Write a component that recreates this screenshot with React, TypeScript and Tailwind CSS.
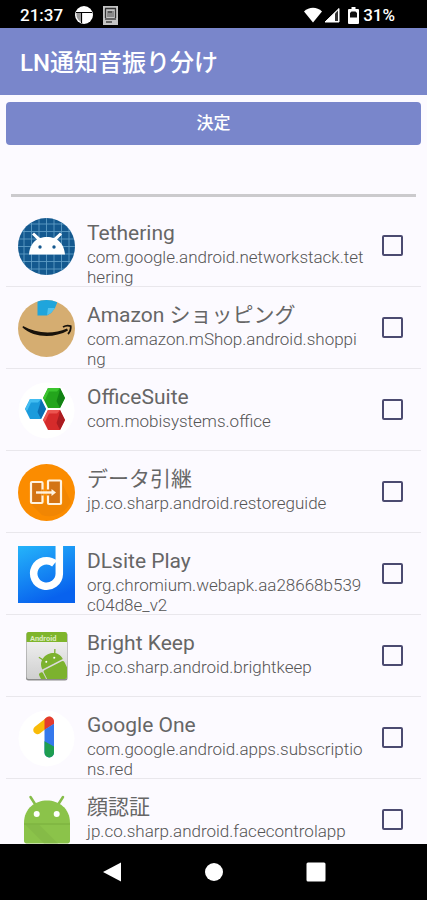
import React, { useState } from 'react';

const TetheringIcon = () => (
  <svg viewBox="0 0 57 57" className="w-full h-full">
    <defs>
      <clipPath id="tether-clip"><circle cx="28.5" cy="28.5" r="28.5" /></clipPath>
    </defs>
    <g clipPath="url(#tether-clip)">
      <rect width="57" height="57" fill="#15598f" />
      <path d="M6 0V57M13.500 0V57M21 0V57M28.500 0V57M36 0V57M43.500 0V57M51 0V57M0 6H57M0 13.500H57M0 21H57M0 28.500H57M0 36H57M0 43.500H57M0 51H57" stroke="#6fabd0" strokeWidth="0.9" opacity="0.8" />
    </g>
    <path d="M11 36.500C11.500 29 15 24 19 21.500L14 16.500L16 14.500L22 20C26 18.500 32 18.500 36 20L42 14.500L44 16.500L39 21.500C43.500 24.500 46.500 29.500 47 36.500Z" fill="#fff" />
    <circle cx="22" cy="29" r="1.700" fill="#15598f" />
    <circle cx="36" cy="29" r="1.700" fill="#15598f" />
  </svg>
);

const AmazonIcon = () => (
  <svg viewBox="0 0 57 57" className="w-full h-full">
    <defs>
      <clipPath id="amazon-clip"><circle cx="28.500" cy="28.500" r="28.500" /></clipPath>
    </defs>
    <g clipPath="url(#amazon-clip)">
      <rect width="57" height="57" fill="#d5ad71" />
      <path d="M19.500 0H39V3L37 8L33 13L29 15.500H19.500Z" fill="#1fa5dc" />
      <path d="M30 8L37 8L33 13L29 15Z" fill="#51c2ec" />
    </g>
    <path d="M5 26C18 33.500 35 34.500 49 28.500L50 30.500C36 38.500 16 38 4.500 27.500Z" fill="#18120b" />
    <path d="M45 27C48 25.200 51 25.500 52.700 26.200C53 29 52 32 50 34" fill="none" stroke="#18120b" strokeWidth="1.800" />
  </svg>
);

const OfficeSuiteIcon = () => (
  <svg viewBox="0 0 57 57" className="w-full h-full">
    <circle cx="28.500" cy="28.500" r="28" fill="#fff" />
    <path d="M30 6H42L47 16L42 26H30L25 16Z" fill="#23a51c" />
    <path d="M30 6H42L39 9.500H31L27 18L25 16Z" fill="#3bc52f" />
    <path d="M42 6L47 16L42 26L38.500 19L41 11Z" fill="#128213" />
    <path d="M12 17H23L28 27L23 37H12L7 27Z" fill="#1b9bdc" />
    <path d="M12 17H23L20 20.500H13L9 29L7 27Z" fill="#42bdf1" />
    <path d="M23 17L28 27L23 37L19.500 30L22 22Z" fill="#0a6fb4" />
    <path d="M30 28H42L47 38L42 48H30L25 38Z" fill="#d62b2b" />
    <path d="M30 28H42L39 31.500H31L27 40L25 38Z" fill="#ec5550" />
    <path d="M42 28L47 38L42 48L38.500 41L41 33Z" fill="#aa1c20" />
  </svg>
);

const RestoreIcon = () => (
  <svg viewBox="0 0 57 57" className="w-full h-full">
    <circle cx="28.500" cy="28.500" r="28.500" fill="#fb8c00" />
    <path d="M13 40L24 51C36 55 47 49 53 38L43 17L36 30L25 40Z" fill="#e77f05" opacity="0.5" />
    <rect x="13" y="18" width="11.500" height="21" rx="1" fill="#d37414" stroke="#fff3e0" strokeWidth="2.200" />
    <rect x="30" y="16.500" width="13" height="23.500" rx="1" fill="#d37414" stroke="#fff3e0" strokeWidth="2.200" />
    <path d="M24.500 25.500V31.500M30 25.500V31.500" stroke="#e77f05" strokeWidth="2.500" />
    <path d="M18 28.500H35" stroke="#fff3e0" strokeWidth="2.400" />
    <path d="M33.500 25L38 28.500L33.500 32Z" fill="#fff3e0" />
  </svg>
);

const DLsiteIcon = () => (
  <svg viewBox="0 0 57 57" className="w-full h-full">
    <defs>
      <linearGradient id="dlsite-bg" x1="0" y1="0" x2="0.400" y2="1">
        <stop offset="0" stopColor="#25b4fa" />
        <stop offset="1" stopColor="#0862ee" />
      </linearGradient>
    </defs>
    <rect width="57" height="57" fill="url(#dlsite-bg)" />
    <path d="M36.500 17.500A12.800 12.800 0 1 0 41.300 28V0" fill="none" stroke="#fff" strokeWidth="7.500" />
  </svg>
);

const BrightKeepIcon = () => (
  <svg viewBox="0 0 57 57" className="w-full h-full">
    <defs>
      <linearGradient id="keep-bg" x1="0" y1="0" x2="0" y2="1">
        <stop offset="0" stopColor="#f6f6f6" />
        <stop offset="1" stopColor="#cfcfcf" />
      </linearGradient>
      <clipPath id="keep-clip"><rect x="8.500" y="4" width="40.500" height="47" rx="2" /></clipPath>
    </defs>
    <rect x="8" y="4.500" width="41.500" height="48" rx="2.500" fill="#8b8b8b" />
    <g clipPath="url(#keep-clip)">
      <rect x="8" y="4" width="42" height="47" fill="url(#keep-bg)" />
      <rect x="8" y="4" width="42" height="10" fill="#7fb52b" />
      <text x="12" y="13" fontSize="7.500" fontWeight="700" fontFamily="Roboto, sans-serif" fill="#dcebc0">Android</text>
      <g transform="rotate(-27 35 36)">
        <path d="M23 36C23 21.500 46 21.500 46 36Z" fill="#7cb22e" />
        <path d="M28 28L25.500 23.500M41 28L43.500 23.500" stroke="#7cb22e" strokeWidth="1.300" />
        <rect x="23" y="37.500" width="23" height="22" rx="2" fill="#7cb22e" />
        <rect x="17.500" y="38" width="4.500" height="15" rx="2.200" fill="#7cb22e" />
        <circle cx="30" cy="31" r="1" fill="#fff" />
        <circle cx="39" cy="31" r="1" fill="#fff" />
      </g>
    </g>
  </svg>
);

const GoogleOneIcon = () => (
  <svg viewBox="0 0 57 57" className="w-full h-full">
    <defs>
      <clipPath id="one-stem"><rect x="26.500" y="6" width="9.500" height="41.500" rx="4.700" /></clipPath>
    </defs>
    <circle cx="28.500" cy="28.500" r="28" fill="#fff" />
    <path d="M19.500 20L31 11" stroke="#f9bb08" strokeWidth="8.500" strokeLinecap="round" />
    <path d="M26.500 9.300L28 7.700C32 4.500 36 8 36 11V14L26.500 20Z" fill="#e33b2e" />
    <g clipPath="url(#one-stem)">
      <path d="M26 20L37 13V48H26Z" fill="#3578ec" />
      <path d="M26 31L37 37V48H26Z" fill="#1e9e50" />
    </g>
  </svg>
);

const FaceControlIcon = () => (
  <svg viewBox="0 0 57 57" className="w-full h-full">
    <path d="M12.500 5L17 12M45 5L40.500 12" stroke="#86bd4a" strokeWidth="2.500" strokeLinecap="round" />
    <path d="M6 31C6 1 52 1 52 31V49C52 50.500 51 51.500 49.500 51.500H8.500C7 51.500 6 50.500 6 49Z" fill="#8bc34a" />
    <path d="M6 32H52" stroke="#78ad3d" strokeWidth="1" />
    <path d="M7 32.500L26 51.500H40L21 32.500Z" fill="#7fb343" opacity="0.500" />
    <circle cx="18.700" cy="22" r="3" fill="#fff" />
    <circle cx="38.700" cy="22" r="3" fill="#fff" />
  </svg>
);

const apps = [
  { name: 'Tethering', pkg: 'com.google.android.networkstack.tethering', icon: <TetheringIcon /> },
  { name: 'Amazon ショッピング', pkg: 'com.amazon.mShop.android.shopping', icon: <AmazonIcon /> },
  { name: 'OfficeSuite', pkg: 'com.mobisystems.office', icon: <OfficeSuiteIcon /> },
  { name: 'データ引継', pkg: 'jp.co.sharp.android.restoreguide', icon: <RestoreIcon /> },
  { name: 'DLsite Play', pkg: 'org.chromium.webapk.aa28668b539c04d8e_v2', icon: <DLsiteIcon /> },
  { name: 'Bright Keep', pkg: 'jp.co.sharp.android.brightkeep', icon: <BrightKeepIcon /> },
  { name: 'Google One', pkg: 'com.google.android.apps.subscriptions.red', icon: <GoogleOneIcon /> },
  { name: '顔認証', pkg: 'jp.co.sharp.android.facecontrolapp', icon: <FaceControlIcon /> },
];

const StatusBar = () => (
  <div className="flex h-7 shrink-0 items-center bg-black pl-5 pr-8 pt-0.5 text-white">
    <span className="text-[17px] font-medium leading-6">21:37</span>
    <svg viewBox="0 0 18 18" className="ml-3 h-[18px] w-[18px]">
      <circle cx="9" cy="9" r="9" fill="#fff" />
      <path d="M1 6.500H17M6.500 6.500V17" stroke="#000" strokeWidth="1.200" />
      <path d="M1.500 7H6V16C3 14.500 1 11 1.500 7Z" fill="#999" />
    </svg>
    <svg viewBox="0 0 15 19" className="ml-2.5 h-[19px] w-[15px]">
      <rect width="15" height="19" fill="#c4c4c4" />
      <path d="M2 2.500H13M2.500 2.500V12M12.500 2.500V12" stroke="#333" strokeWidth="1.300" />
      <path d="M4 5H11V11H4Z" fill="#8a8a8a" />
      <path d="M5 6H9M2 13H13M3 16H9" stroke="#444" strokeWidth="1.300" />
    </svg>
    <div className="ml-auto flex items-center">
      <svg viewBox="0 0 18 16" className="h-4 w-[18px]">
        <path d="M0 4.500C5 -0.500 13 -0.500 18 4.500L9 15.500Z" fill="#fff" />
      </svg>
      <svg viewBox="0 0 16 16" className="ml-0.5 h-4 w-4">
        <path d="M15 1.500V15H1Z" fill="#fff" stroke="#fff" />
        <path d="M11 6.500L14 3.500V14H11Z" fill="#333" />
      </svg>
      <svg viewBox="0 0 11 17" className="ml-2 h-[17px] w-[11px]">
        <path d="M3.500 0H7.500V2H10Q11 2 11 3V16Q11 17 10 17H1Q0 17 0 16V3Q0 2 1 2H3.500Z" fill="#fff" />
        <path d="M3.500 4.500H7.500L9 6V10.500H2V6Z" fill="#111" />
      </svg>
      <span className="ml-1 text-[17px] font-medium leading-6">31%</span>
    </div>
  </div>
);

const NavBar = () => (
  <nav className="flex h-14 shrink-0 items-center justify-center gap-[62px] bg-black">
    <button aria-label="Back" className="flex h-10 w-10 items-center justify-center">
      <svg viewBox="0 0 20 20" className="h-5 w-5"><path d="M19 0.500V19.500L1 10Z" fill="#fff" /></svg>
    </button>
    <button aria-label="Home" className="flex h-10 w-10 items-center justify-center">
      <svg viewBox="0 0 20 20" className="h-5 w-5"><circle cx="10" cy="10" r="9" fill="#fff" /></svg>
    </button>
    <button aria-label="Recents" className="flex h-10 w-10 items-center justify-center">
      <svg viewBox="0 0 20 20" className="h-5 w-5"><rect x="0.500" y="0.500" width="19" height="19" rx="1.500" fill="#fff" /></svg>
    </button>
  </nav>
);

const App = () => {
  const [query, setQuery] = useState('');
  const [selected, setSelected] = useState<string[]>([]);

  const toggle = (pkg: string) => {
    setSelected(selected.includes(pkg) ? selected.filter(p => p !== pkg) : [...selected, pkg]);
  };

  return (
    <div className="flex h-screen flex-col bg-[#fcfaff] font-['Roboto','Noto_Sans_CJK_JP',sans-serif]">
      <StatusBar />

      <header className="flex h-[67px] shrink-0 items-center bg-[#7986cb] px-5 pt-0.5">
        <h1 className="text-2xl font-medium text-white">LN通知音振り分け</h1>
      </header>

      <div className="shrink-0 px-1.5 pt-[7px]">
        <button className="h-[43px] w-full rounded-sm bg-[#7986cb] text-[17px] font-medium text-white">
          決定
        </button>
      </div>

      <div className="shrink-0 px-[11px] pb-2">
        <input
          type="text"
          aria-label="アプリ検索"
          className="block h-[52px] w-full border-b-[3px] border-[#cbcacd] bg-transparent text-lg text-[#555] outline-none"
          value={query}
          onChange={(e) => setQuery(e.target.value)}
        />
      </div>

      <ul className="min-h-0 flex-1 overflow-y-auto px-1.5 [scrollbar-width:none]">
        {apps.filter(a => a.name.includes(query) || a.pkg.includes(query)).map(({ name, pkg, icon }) => (
          <li key={pkg} className="h-[82px] border-b border-[#e9e7ec]">
            <label className="flex h-full items-start pl-3 pr-[18px]">
              <span className="mt-[13px] h-[57px] w-[57px] shrink-0">{icon}</span>
              <span className="ml-3 mt-[15px] w-0 flex-1">
                <span className="block text-[21px] leading-[27px] text-[#666]">{name}</span>
                <span className="block break-all text-[17px] font-light leading-5 text-[#555]">{pkg}</span>
              </span>
              <input
                type="checkbox"
                className="ml-[17px] mt-[30px] h-[21px] w-[21px] shrink-0 appearance-none rounded-xs border-2 border-[#4b4a70] checked:bg-[#7986cb]"
                checked={selected.includes(pkg)}
                onChange={() => toggle(pkg)}
              />
            </label>
          </li>
        ))}
      </ul>

      <NavBar />
    </div>
  );
};

export default App;
